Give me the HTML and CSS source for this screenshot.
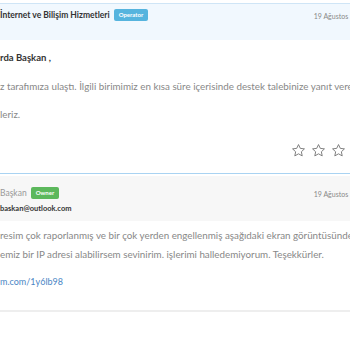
FILE: index.html
```html
<!DOCTYPE html>
<html lang="tr">
<head>
    <meta charset="UTF-8">
    <meta name="viewport" content="width=device-width, initial-scale=1.0">
    <title>Destek Talebi</title>
    <link rel="stylesheet" href="styles.css">
</head>
<body>
    <div class="thread">
        <div class="message staff">
            <div class="message-header">
                <div class="author">
                    <span class="author-name">İnternet ve Bilişim Hizmetleri</span>
                    <span class="badge operator">Operator</span>
                </div>
                <span class="date">19 Ağustos 2019 14:25</span>
            </div>
            <div class="message-body">
                <p class="greeting">rda Başkan ,</p>
                <p>z tarafımıza ulaştı. İlgili birimimiz en kısa süre içerisinde destek talebinize yanıt verecektir.</p>
                <p>leriz.</p>
                <div class="rating">
                    <svg class="star" viewBox="0 0 24 24"><path d="M12 2.5l2.9 6.1 6.6.8-4.9 4.6 1.3 6.6L12 17.3l-5.9 3.3 1.3-6.6-4.9-4.6 6.6-.8z"/></svg>
                    <svg class="star" viewBox="0 0 24 24"><path d="M12 2.5l2.9 6.1 6.6.8-4.9 4.6 1.3 6.6L12 17.3l-5.9 3.3 1.3-6.6-4.9-4.6 6.6-.8z"/></svg>
                    <svg class="star" viewBox="0 0 24 24"><path d="M12 2.5l2.9 6.1 6.6.8-4.9 4.6 1.3 6.6L12 17.3l-5.9 3.3 1.3-6.6-4.9-4.6 6.6-.8z"/></svg>
                    <svg class="star" viewBox="0 0 24 24"><path d="M12 2.5l2.9 6.1 6.6.8-4.9 4.6 1.3 6.6L12 17.3l-5.9 3.3 1.3-6.6-4.9-4.6 6.6-.8z"/></svg>
                    <svg class="star" viewBox="0 0 24 24"><path d="M12 2.5l2.9 6.1 6.6.8-4.9 4.6 1.3 6.6L12 17.3l-5.9 3.3 1.3-6.6-4.9-4.6 6.6-.8z"/></svg>
                </div>
            </div>
        </div>

        <div class="message customer">
            <div class="message-header">
                <div class="author-block">
                    <div class="author">
                        <span class="author-name light">Başkan</span>
                        <span class="badge owner">Owner</span>
                    </div>
                    <span class="email">baskan@outlook.com</span>
                </div>
                <span class="date">19 Ağustos 2019 14:10</span>
            </div>
            <div class="message-body">
                <p class="wrapped">resim çok raporlanmış ve bir çok yerden engellenmiş aşağıdaki ekran görüntüsünde<br>emiz bir IP adresi alabilirsem sevinirim. işlerimi halledemiyorum. Teşekkürler.</p>
                <p><a href="#" class="link">m.com/1y6lb98</a></p>
            </div>
        </div>
    </div>
</body>
</html>
```

FILE: styles.css
```css
body {
    margin: 0;
    overflow: hidden;
    background-color: #fff;
    font-family: Lato, "Noto Sans", sans-serif;
    color: #888;
}
.thread {
    margin-left: -10px;
    width: 406px;
    padding-top: 3px;
}
.message {
    border-bottom: 1px solid #a9d3f2;
}
.message.staff {
    border-top: 1px solid #cfe5f6;
}
.message.customer {
    margin-top: 2px;
    border-bottom: 2px solid #eeeeee;
}
.message-header {
    display: flex;
    justify-content: space-between;
    align-items: flex-start;
    padding: 4px 10px 0;
    box-sizing: border-box;
    white-space: nowrap;
}
.staff .message-header {
    height: 36px;
    background-color: #f1f8fe;
}
.customer .message-header {
    height: 45px;
    padding-top: 10px;
    background-color: #f7f7f7;
}
.author {
    display: flex;
    align-items: center;
    gap: 4px;
    height: 14px;
}
.author-block {
    display: flex;
    flex-direction: column;
    gap: 4px;
}
.author-name {
    font-size: 8.5px;
    font-weight: bold;
    color: #333;
}
.author-name.light {
    font-weight: normal;
    color: #999;
    font-size: 8.5px;
}
.badge {
    display: inline-block;
    padding: 0 5px;
    border-radius: 2px;
    font-size: 6px;
    font-weight: bold;
    line-height: 12px;
    color: #fff;
}
.badge.operator {
    background-color: #56b4de;
}
.badge.owner {
    background-color: #5cb85c;
}
.email {
    font-size: 7.5px;
    font-weight: bold;
    color: #333;
}
.date {
    font-size: 7px;
    color: #888;
    line-height: 14px;
    padding-top: 1px;
}
.customer .date {
    padding-top: 1px;
}
.message-body {
    padding: 11px 10px 15px;
    font-size: 9.8px;
    line-height: 14px;
    white-space: nowrap;
}
.message-body p {
    margin: 0 0 14px;
}
.message-body .greeting {
    font-weight: bold;
    font-size: 9.5px;
    color: #333;
}
.customer .message-body {
    padding-top: 5px;
    padding-bottom: 21px;
    font-size: 9.8px;
}
.customer .message-body p {
    margin-bottom: 10px;
}
.customer .message-body p:last-child {
    margin-bottom: 0;
}
.wrapped {
    line-height: 19px;
}
.link {
    color: #4a86c5;
    text-decoration: none;
    font-size: 9px;
}
.rating {
    display: flex;
    justify-content: flex-end;
    gap: 5px;
    padding-top: 8px;
}
.star {
    width: 15px;
    height: 15px;
    fill: none;
    stroke: #777;
    stroke-width: 1.5;
    stroke-linejoin: round;
}
```
